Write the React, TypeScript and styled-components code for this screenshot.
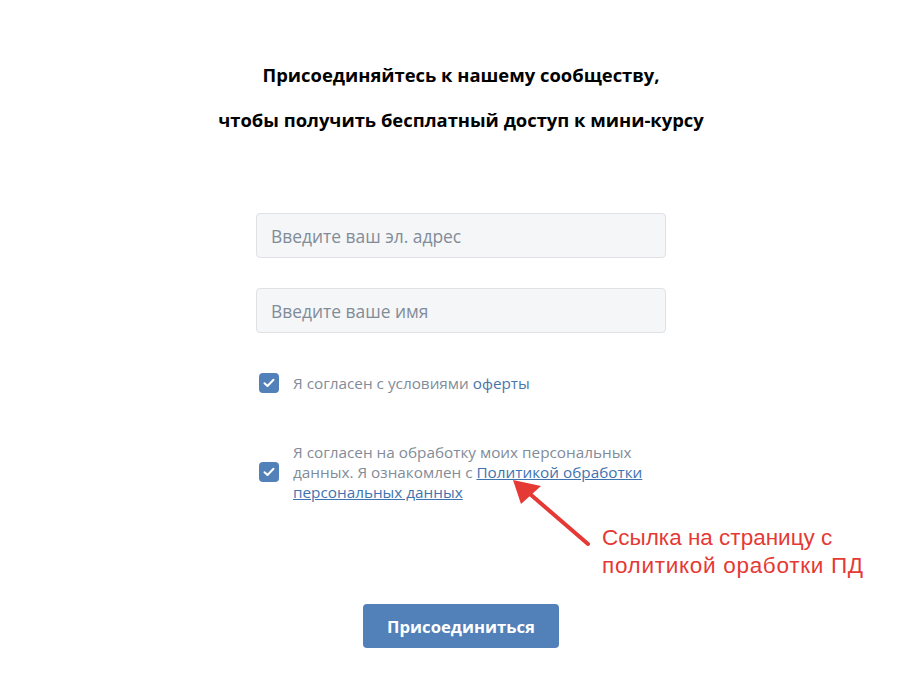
import React from 'react';
import styled, { createGlobalStyle } from 'styled-components';

const GlobalStyle = createGlobalStyle`
  html, body {
    margin: 0;
    padding: 0;
    background: #ffffff;
  }
  body {
    font-family: 'Open Sans', 'Noto Sans', sans-serif;
  }
`;

const Page = styled.div`
  position: relative;
  width: 919px;
  height: 700px;
  display: flex;
  flex-direction: column;
  align-items: center;
  padding-top: 52px;
  padding-left: 3px;
  box-sizing: border-box;
`;

const Title = styled.h1`
  margin: 0;
  font-size: 18.4px;
  line-height: 45px;
  font-weight: 700;
  color: #000000;
  text-align: center;
`;

const Form = styled.form`
  width: 410px;
  margin-top: 71px;
  display: flex;
  flex-direction: column;
`;

const Input = styled.input`
  box-sizing: border-box;
  width: 100%;
  height: 45px;
  padding: 0 14px;
  margin-bottom: 30px;
  background: #f5f6f8;
  border: 1px solid #dfe1e6;
  border-radius: 4px;
  font-family: inherit;
  font-size: 17.4px;
  color: #000;
  outline: none;

  &::placeholder {
    color: #818c99;
  }
`;

const Agree = styled.label<{ $gap: number }>`
  display: flex;
  align-items: center;
  gap: 14px;
  padding-left: 3px;
  margin-top: ${({ $gap }) => $gap}px;
  cursor: pointer;
`;

const Box = styled.span`
  flex: 0 0 20px;
  width: 20px;
  height: 20px;
  border-radius: 4px;
  background: #5181b8;
  display: flex;
  align-items: center;
  justify-content: center;
`;

const AgreeText = styled.span`
  font-size: 15.3px;
  line-height: 20px;
  color: #818c99;
  max-width: 362px;
`;

const Blue = styled.span`
  color: #4a76a8;
`;

const Link = styled.a`
  color: #3f73b0;
  text-decoration: underline;
`;

const Submit = styled.button`
  align-self: center;
  margin-top: 102px;
  width: 196px;
  height: 44px;
  border: none;
  border-radius: 4px;
  background: #5181b8;
  color: #ffffff;
  font-family: inherit;
  font-size: 16.7px;
  font-weight: 700;
  cursor: pointer;
`;

const Note = styled.div`
  position: absolute;
  left: 602px;
  top: 524px;
  font-family: 'Liberation Sans', Arial, sans-serif;
  font-size: 22.5px;
  line-height: 28px;
  color: #e53935;
`;

const Wide = styled.span`
  letter-spacing: 0.7px;
`;

const Arrow = styled.svg`
  position: absolute;
  left: 505px;
  top: 472px;
  overflow: visible;
`;

const Check = () => (
  <svg width="12" height="10" viewBox="0 0 12 10">
    <path d="M1.5 5.2 L4.5 8 L10.5 1.8" fill="none" stroke="#ffffff" strokeWidth="2" strokeLinecap="round" strokeLinejoin="round" />
  </svg>
);

export default function App() {
  return (
    <>
      <GlobalStyle />
      <Page>
        <Title>Присоединяйтесь к нашему сообществу,</Title>
        <Title>чтобы получить бесплатный доступ к мини-курсу</Title>
        <Form onSubmit={(e) => e.preventDefault()}>
          <Input type="email" placeholder="Введите ваш эл. адрес" />
          <Input type="text" placeholder="Введите ваше имя" />
          <Agree $gap={10}>
            <Box><Check /></Box>
            <AgreeText>
              Я согласен с условиями <Blue>оферты</Blue>
            </AgreeText>
          </Agree>
          <Agree $gap={49}>
            <Box><Check /></Box>
            <AgreeText>
              Я согласен на обработку моих персональных данных. Я ознакомлен с{' '}
              <Link href="#">Политикой обработки персональных данных</Link>
            </AgreeText>
          </Agree>
          <Submit type="submit">Присоединиться</Submit>
        </Form>
        <Arrow width="90" height="80" viewBox="0 0 90 80">
          <line x1="83" y1="72" x2="18" y2="16" stroke="#e53935" strokeWidth="4" strokeLinecap="round" />
          <polygon points="8,8 36,14 16,32" fill="#e53935" />
        </Arrow>
        <Note>
          Ссылка на страницу с
          <br />
          <Wide>политикой оработки ПД</Wide>
        </Note>
      </Page>
    </>
  );
}
